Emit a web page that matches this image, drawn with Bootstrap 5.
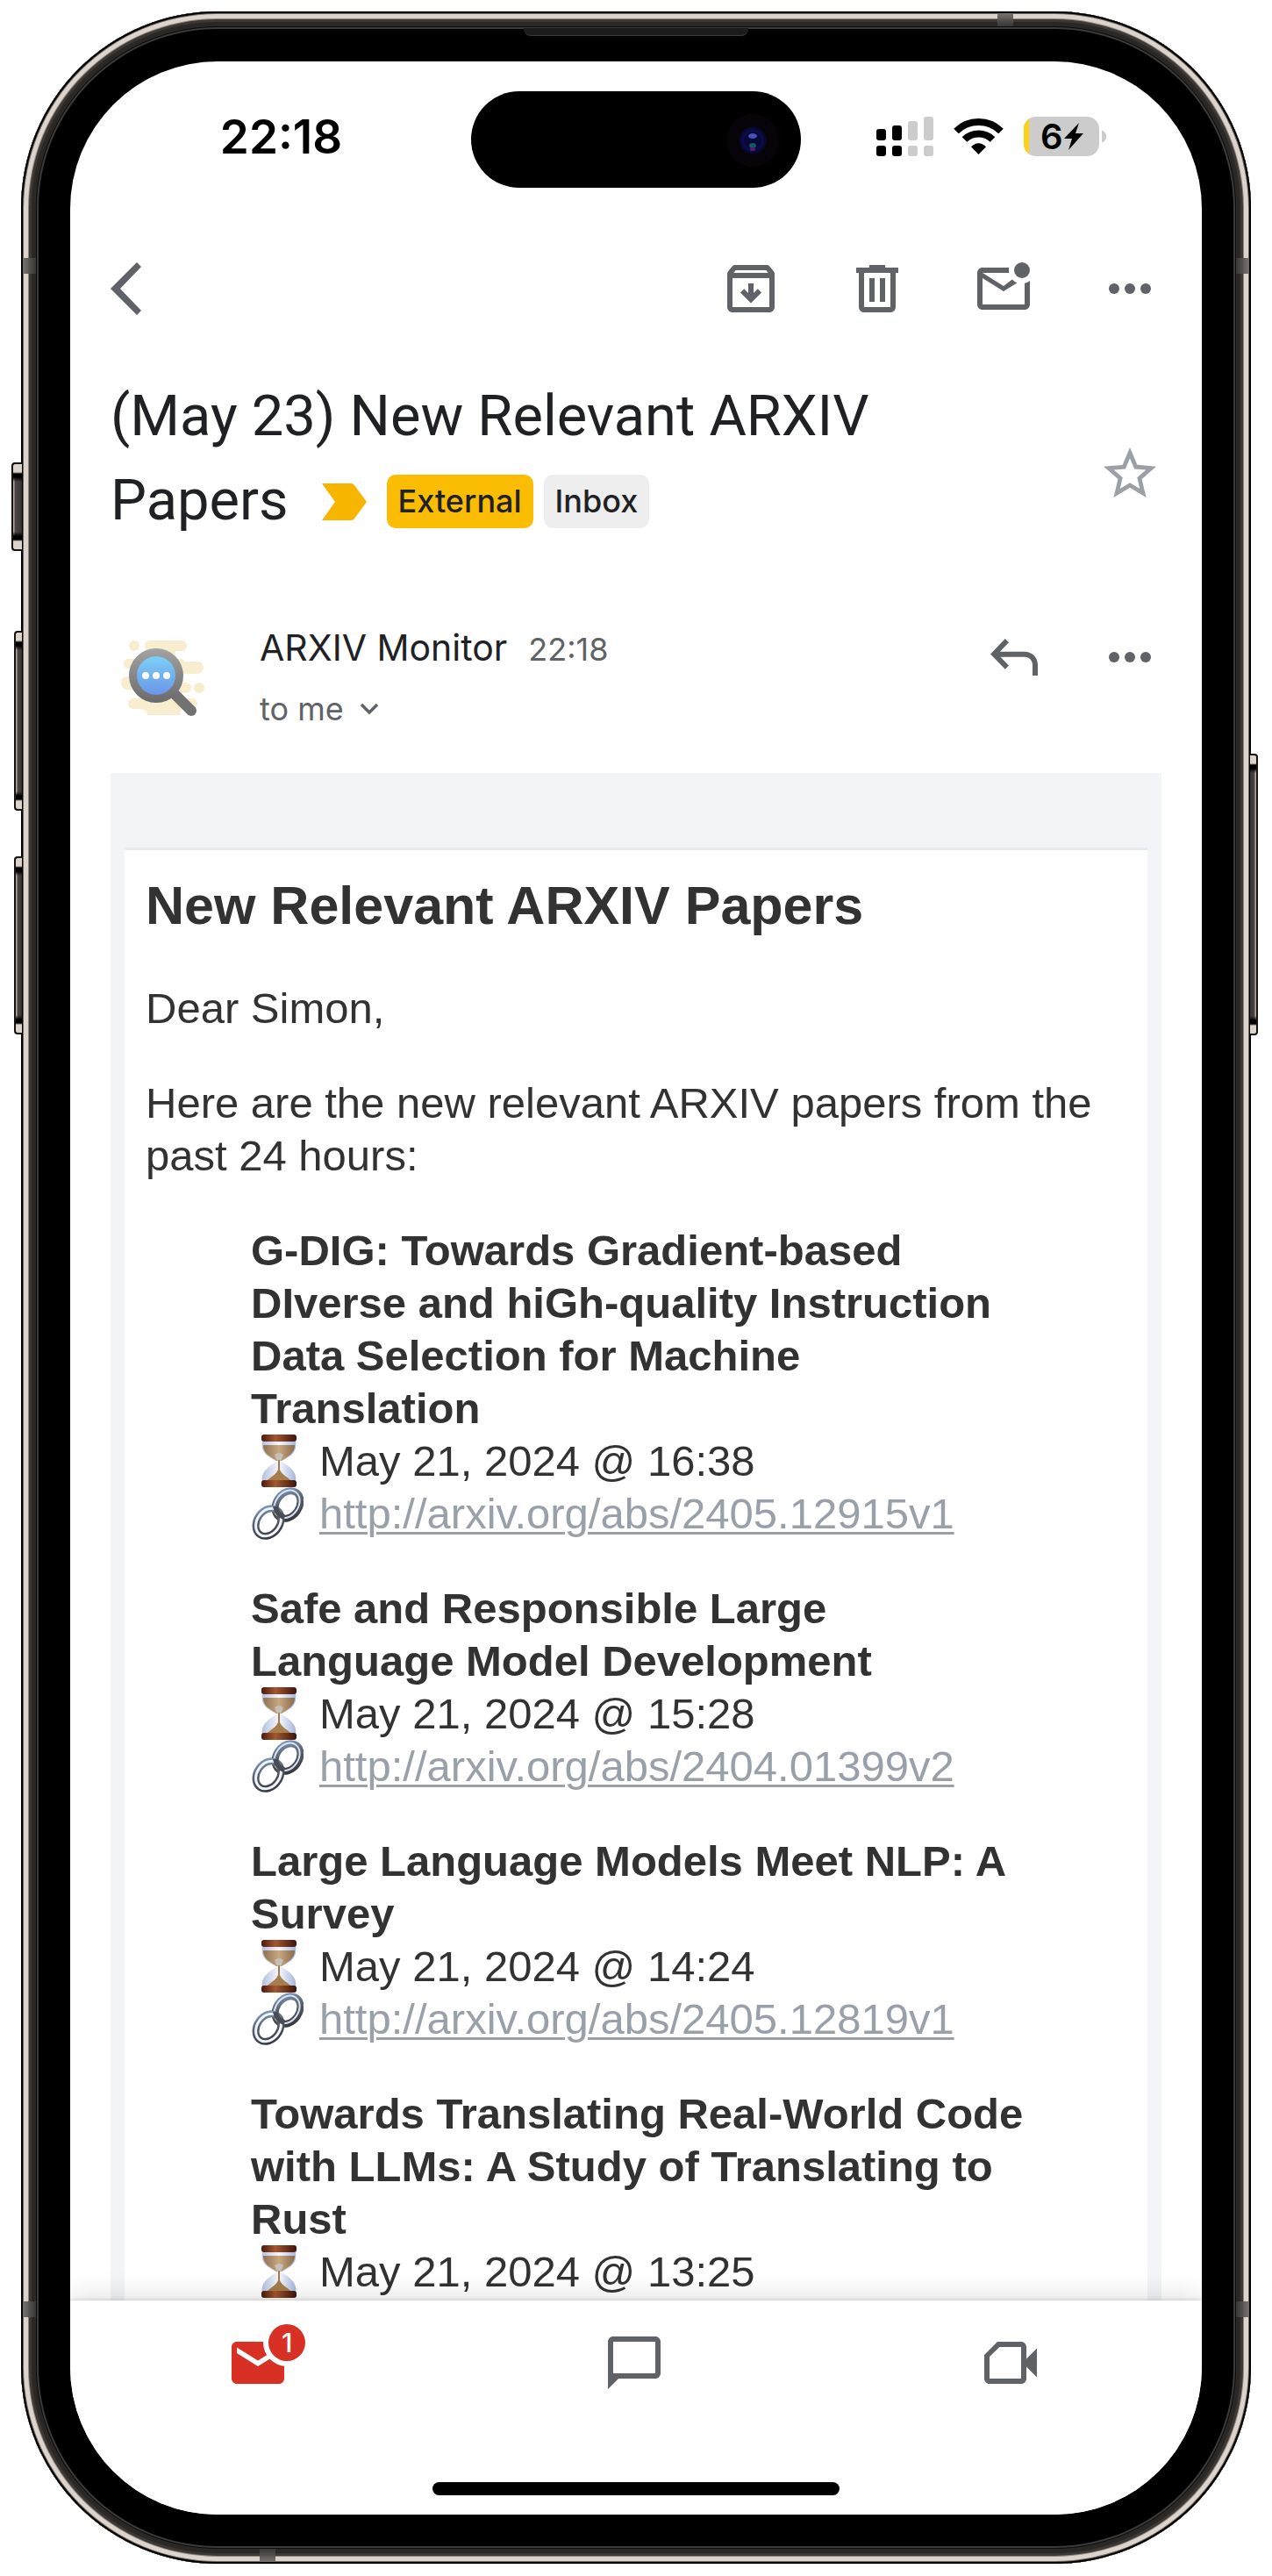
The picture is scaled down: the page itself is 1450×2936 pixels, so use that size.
<!DOCTYPE html>
<html lang="en">
<head>
<meta charset="utf-8">
<meta name="viewport" content="width=device-width, initial-scale=1">
<title>(May 23) New Relevant ARXIV Papers</title>
<link href="https://cdn.jsdelivr.net/npm/bootstrap@5.3.0/dist/css/bootstrap.min.css" rel="stylesheet">
<style>
  body { background: #fff; font-family: Inter, "Liberation Sans", sans-serif; color: #202124; }

  /* Device */
  .stage { padding: 13px 24px 14px; min-height: 100vh; }
  .device {
    background: #000; border-radius: 224px; padding: 57px 56px 56px;
    box-shadow: inset 0 0 0 2px #000, inset 0 0 0 3px #6b635c, inset 0 0 0 8px #dcd3cc,
      inset 0 0 0 9px #8d857e, inset 0 0 0 12px #3c3835, inset 0 0 0 17px #2a2725,
      inset 0 0 0 18px #0c0c0c, inset 0 0 0 20px #3a3a3a;
  }
  .screen { background: #fff; border-radius: 168px; overflow: hidden; }
  .side-key {
    position: absolute; width: 12px; border: 2px solid #17130f; border-right: 0; border-radius: 4px 0 0 4px;
    background:
      linear-gradient(#dcd3cc 0 9px, #000 11px 15px, transparent 20px, transparent calc(100% - 20px), #000 calc(100% - 15px) calc(100% - 11px), #dcd3cc calc(100% - 9px)),
      linear-gradient(90deg, #b0a8a2 0 1px, #4c4646 2px, #383333);
  }
  .side-key.thin { width: 9px; }
  .key-action { left: -11px; top: 514px; height: 101px; }
  .key-up { left: -8px; top: 706px; height: 205px; }
  .key-down { left: -8px; top: 963px; height: 203px; }
  .key-power { right: -8px; top: 846px; height: 321px; transform: scaleX(-1); }
  .band { position: absolute; opacity: .95; }
  .band-side { width: 15px; height: 18px; background: linear-gradient(90deg, #6f6c69, #3a3836); }
  .band-edge { width: 18px; height: 15px; background: linear-gradient(#6f6c69, #3a3836); }
  .band-flip { rotate: 180deg; }
  .earpiece { position: absolute; top: 19px; left: 50%; width: 256px; height: 9px; margin-left: -128px;
    background: #1c1c1c; border-bottom: 1px solid #3a3a3a; border-radius: 0 0 8px 8px; }

  /* Status bar */
  .status { padding-top: 34px; }
  .status-side { flex: 1 1 0; padding-bottom: 6px; }
  .clock { font-size: 53px; font-weight: 600; line-height: 60px; color: #000; }
  .island { width: 376px; height: 110px; border-radius: 55px; background: #000; }

  /* Mail */
  .gutter { padding-left: 46px; padding-right: 46px; }
  .icon-btn { border: 0; padding: 0; background: none; color: #5f6368; line-height: 0; flex: none; }
  .icon-btn svg, .tab svg { fill: currentColor; }
  .toolbar { margin-top: 79px; gap: 72px; }
  .subject { font-family: Roboto, sans-serif; font-size: 65px; font-weight: 400; line-height: 96px; margin: 0; color: #202124; }
  .subject-row { margin-top: 61px; }
  .star { color: #9aa0a6; margin-top: 36px; }
  .tag { font-family: Inter, sans-serif; font-size: 36px; font-weight: 500; line-height: 61px; padding: 0 13px; border-radius: 10px; color: #202124; }
  .tag-external { background: #fbbc04; }
  .tag-inbox { background: #eee; }
  .tag-group { gap: 12px; margin-left: 34px; padding-bottom: 6px; vertical-align: middle; line-height: 61px; }
  .sender-row { margin-top: 95px; }
  .sender-name { font-size: 41px; line-height: 50px; }
  .sender-meta { font-size: 36px; line-height: 50px; color: #5f6368; }
  .sender-text { margin-left: 60px; }
  .recipient { margin-top: 18px; gap: 18px; }
  .sender-actions { gap: 60px; }

  /* Message */
  .message { background: #f3f4f7; padding: 85px 16px 0; margin-top: 48px;
    font-family: "Liberation Sans", Arial, sans-serif; font-size: 49px; line-height: 60px; color: #323232; }
  .paper { background: #fff; border-top: 3px solid #e9eaec; padding: 24px 24px 0; }
  .paper h1 { font-size: 61px; font-weight: 700; line-height: 78px; margin: 0 0 48px; }
  .paper p { margin: 0 0 48px; }
  .papers { margin: 0; padding: 0 110px 0 120px; }
  .papers li + li { margin-top: 48px; }
  .papers h2 { font-size: 49px; font-weight: 700; line-height: 60px; margin: 0; }
  .line { gap: 18px; }
  .line a { color: #9aa0a9; text-decoration-thickness: 3px; text-underline-offset: 4px; }

  /* Bottom bar */
  .tabs { background: #fff; box-shadow: 0 -3px 30px rgba(0,0,0,.14), 0 -1px 4px rgba(0,0,0,.12); padding-top: 35px; position: relative; }
  .tabs .row { padding-right: 4px; }
  .tab { color: #5f6368; line-height: 0; }
  .tab-mail { color: #d93025; }
  .count { position: absolute; left: 48px; top: -8px; width: 42px; height: 42px; border-radius: 50%; background: #d93025; color: #fff;
    font-size: 30px; font-weight: 500; line-height: 42px; text-align: center; box-shadow: 0 0 0 6px #fff; }
  .home-bar { width: 464px; height: 15px; border-radius: 8px; background: #000; margin: 100px auto 22px; }
</style>
</head>
<body>
<div class="stage d-flex flex-column">
<div class="device position-relative d-flex flex-column flex-grow-1">
  <span class="side-key key-action"></span>
  <span class="side-key thin key-up"></span>
  <span class="side-key thin key-down"></span>
  <span class="side-key thin key-power"></span>
  <span class="band band-side" style="left:2px;top:281px"></span>
  <span class="band band-side band-flip" style="right:2px;top:281px"></span>
  <span class="band band-side" style="left:2px;bottom:281px"></span>
  <span class="band band-side band-flip" style="right:2px;bottom:281px"></span>
  <span class="band band-edge" style="right:271px;top:2px"></span>
  <span class="band band-edge band-flip" style="left:272px;bottom:2px"></span>
  <span class="earpiece"></span>

  <div class="screen d-flex flex-column flex-grow-1">
    <div class="status d-flex align-items-center">
      <div class="status-side ps-4 text-center"><span class="clock">22:18</span></div>
      <div class="island d-flex justify-content-end align-items-center">
        <svg width="110" height="110" viewBox="0 0 110 110" aria-hidden="true">
          <defs>
            <radialGradient id="lens"><stop offset="0" stop-color="#15157a"/><stop offset=".65" stop-color="#0d0d50"/><stop offset="1" stop-color="#05051c"/></radialGradient>
          </defs>
          <circle cx="55" cy="56" r="30" fill="#060408"/>
          <circle cx="55" cy="56" r="16" fill="url(#lens)"/>
          <circle cx="55" cy="56" r="10" fill="#070738"/>
          <ellipse cx="55" cy="51" rx="5" ry="3" fill="#4a4fb8"/>
          <ellipse cx="55" cy="62" rx="4" ry="3" fill="#0c5a5e"/>
          <ellipse cx="55" cy="66" rx="3" ry="2" fill="#5a1a6e"/>
        </svg>
      </div>
      <div class="status-side pe-4 d-flex justify-content-center">
        <svg width="262" height="54" viewBox="0 -4 262 54" role="img" aria-label="Signal, Wi-Fi, battery 6 percent charging">
          <g fill="#000"><rect x="0" y="14" width="11" height="13" rx="3"/><rect x="18" y="10" width="11" height="17" rx="3"/>
            <rect x="0" y="33" width="11" height="12" rx="3"/><rect x="18" y="33" width="11" height="12" rx="3"/></g>
          <g fill="#ccc"><rect x="36" y="5" width="11" height="22" rx="3"/><rect x="54" y="0" width="11" height="27" rx="3"/>
            <rect x="36" y="33" width="11" height="12" rx="3"/><rect x="54" y="33" width="11" height="12" rx="3"/></g>
          <g transform="translate(88 1)" fill="none" stroke="#000" stroke-width="8">
            <path d="M3 15.500a36.500 36.500 0 0 1 51 0"/><path d="M12.500 25a23 23 0 0 1 32 0"/>
            <path d="M28.500 42 20 33.200q8.500-8 17 0z" fill="#000" stroke="none"/>
          </g>
          <clipPath id="cell"><rect x="168" y="0" width="86" height="45" rx="14"/></clipPath>
          <g clip-path="url(#cell)"><rect x="168" width="86" height="45" fill="#ccc"/><rect x="168" width="6" height="45" fill="#ffd014"/></g>
          <path d="M257 15.500c7 2.500 7 12 0 14z" fill="#ccc"/>
          <text x="187" y="37" font-family="Inter, sans-serif" font-weight="600" font-size="40">6</text>
          <path d="M231 7 214 25h9l-4 13 17-19h-9z"/>
        </svg>
      </div>
    </div>

    <div class="toolbar gutter d-flex align-items-center">
      <button class="icon-btn me-auto" type="button" aria-label="Back">
        <svg width="36" height="72" viewBox="0 0 36 72"><path d="M30 6 35 11 11 36l24 25-5 5L0 36z"/></svg></button>
      <button class="icon-btn" type="button" aria-label="Archive">
        <svg width="72" height="72" viewBox="0 0 24 24"><path d="M20.540 5.230l-1.390-1.680C18.880 3.210 18.470 3 18 3H6c-.47 0-.88.210-1.160.550L3.460 5.230C3.170 5.570 3 6.020 3 6.500V19c0 1.100.9 2 2 2h14c1.100 0 2-.9 2-2V6.500c0-.48-.17-.93-.46-1.270zM6.240 5h11.520l.83 1H5.420l.82-1zM5 19V8h14v11H5z"/><path d="M12 17.500 8 13.500l1.400-1.400 1.600 1.600V10h2v3.700l1.600-1.600L16 13.500z"/></svg></button>
      <button class="icon-btn" type="button" aria-label="Delete">
        <svg width="72" height="72" viewBox="0 0 24 24"><path d="M15 4V3H9v1H4v2h1v13c0 1.100.9 2 2 2h10c1.100 0 2-.9 2-2V6h1V4h-5zm2 15H7V6h10v13zM9 8h2v9H9zm4 0h2v9h-2z"/></svg></button>
      <button class="icon-btn" type="button" aria-label="Mark as unread">
        <svg width="72" height="72" viewBox="0 0 24 24"><circle cx="19" cy="5" r="3"/><path d="M14 4H4c-1.100 0-2 .9-2 2v12c0 1.100.9 2 2 2h16c1.100 0 2-.9 2-2V9c-.6.500-1.300.800-2 .950V18H4V8l8 5 5.100-3.200c-.7-.3-1.300-.8-1.800-1.300L12 11 4 6h10.100c-.1-.7-.1-1.300-.1-2z"/></svg></button>
      <button class="icon-btn" type="button" aria-label="More options">
        <svg width="72" height="72" viewBox="0 0 24 24"><circle cx="6" cy="12" r="2"/><circle cx="12" cy="12" r="2"/><circle cx="18" cy="12" r="2"/></svg></button>
    </div>

    <div class="subject-row gutter d-flex align-items-center">
      <h1 class="subject flex-grow-1">(May 23) New Relevant ARXIV<br>Papers<span class="tag-group d-inline-flex align-items-center">
          <svg class="me-2" width="58" height="42" viewBox="0 0 58 42" aria-hidden="true"><path d="M4 0h33q3 0 4 2l14 19-14 19q-1 2-4 2H4l15-21z" fill="#f7b500"/></svg>
          <span class="tag tag-external">External</span><span class="tag tag-inbox">Inbox</span></span></h1>
      <button class="icon-btn star" type="button" aria-label="Star">
        <svg width="72" height="72" viewBox="0 0 24 24"><path d="M22 9.240l-7.190-.62L12 2 9.190 8.630 2 9.240l5.460 4.730L5.820 21 12 17.270 18.180 21l-1.630-7.030L22 9.240zM12 15.400l-3.760 2.270 1-4.280-3.320-2.880 4.380-.38L12 6.100l1.710 4.040 4.380.38-3.320 2.880 1 4.280L12 15.400z"/></svg></button>
    </div>

    <div class="sender-row gutter d-flex align-items-start">
      <svg width="110" height="116" viewBox="0 0 110 116" aria-hidden="true">
        <defs><linearGradient id="glass" x2="0" y2="1"><stop offset="0" stop-color="#7bd0f6"/><stop offset="1" stop-color="#6c95e8"/></linearGradient>
          <linearGradient id="rim" x2="0" y2="1"><stop offset="0" stop-color="#a3a3a3"/><stop offset="1" stop-color="#6a6a6a"/></linearGradient></defs>
        <g fill="#f9edcf"><circle cx="27" cy="23" r="6"/><rect x="39" y="17" width="48" height="12" rx="6"/><rect x="15" y="38" width="70" height="11" rx="5"/>
          <rect x="45" y="28" width="29" height="70"/><rect x="60" y="41" width="46" height="14" rx="7"/><rect x="12" y="58" width="60" height="15" rx="7"/>
          <rect x="60" y="65" width="32" height="12" rx="6"/><circle cx="101" cy="71" r="6"/><rect x="20" y="83" width="79" height="12" rx="6"/><path d="M34 92h52q-8 4-6 10H42q0-6-8-7z"/></g>
        <path d="M74 79 92 97" stroke="#727272" stroke-width="12" stroke-linecap="round"/>
        <circle cx="52" cy="57" r="31" fill="url(#rim)"/><circle cx="52" cy="57" r="22" fill="url(#glass)"/>
        <g fill="#fff"><circle cx="40" cy="57" r="4"/><circle cx="52" cy="57" r="4"/><circle cx="64" cy="57" r="4"/></g>
      </svg>
      <div class="sender-text flex-grow-1">
        <div class="d-flex align-items-baseline"><span class="sender-name">ARXIV Monitor</span><span class="sender-meta ms-4">22:18</span></div>
        <div class="recipient sender-meta d-flex align-items-center">to me
          <svg width="22" height="14" viewBox="0 0 22 14" aria-hidden="true"><path d="M2 2l9 9 9-9" fill="none" stroke="#5f6368" stroke-width="3.500"/></svg></div>
      </div>
      <div class="sender-actions d-flex">
        <button class="icon-btn" type="button" aria-label="Reply">
          <svg width="72" height="72" viewBox="0 0 24 24"><path d="M10 6.400 8.600 5 3 10.800l5.600 5.800L10 15.200 6.800 11.900H16c1.700 0 3 1.300 3 3V19h2v-4.100c0-2.800-2.200-5-5-5H6.600z"/></svg></button>
        <button class="icon-btn" type="button" aria-label="More message options">
          <svg width="72" height="72" viewBox="0 0 24 24"><circle cx="6" cy="12" r="2"/><circle cx="12" cy="12" r="2"/><circle cx="18" cy="12" r="2"/></svg></button>
      </div>
    </div>

    <svg width="0" height="0" class="position-absolute" aria-hidden="true">
      <defs>
        <linearGradient id="wood"><stop offset="0" stop-color="#4a1c0c"/><stop offset=".4" stop-color="#a4562f"/><stop offset="1" stop-color="#3c1508"/></linearGradient>
        <linearGradient id="sand"><stop offset="0" stop-color="#8f7152"/><stop offset=".5" stop-color="#c9a880"/><stop offset="1" stop-color="#8a6b4c"/></linearGradient>
        <linearGradient id="bulb"><stop offset="0" stop-color="#b3c0e0"/><stop offset=".5" stop-color="#f7f8fc"/><stop offset="1" stop-color="#a4b6e0"/></linearGradient>
        <linearGradient id="steel" x2="1" y2="1"><stop offset="0" stop-color="#7d9fc8"/><stop offset=".4" stop-color="#5d636e"/><stop offset="1" stop-color="#34343a"/></linearGradient>
        <symbol id="hourglass" viewBox="0 0 60 60">
          <path d="M13 8h38c2 14-7 17-16 23 10 6 18 12 16 23H13c-2-12 7-17 16-23-9-6-18-9-16-23z" fill="url(#bulb)"/>
          <path d="M14 12h36c0 10-8 13-15 18h-6c-7-5-15-8-15-18z" fill="url(#sand)"/>
          <path d="M27 23q5-4 10 0l-3 7h-4z" fill="#c4c0bd"/>
          <path d="M31 29h2v11c2 6 9 8 13 13H18c4-5 11-7 13-13z" fill="#a57c4a"/>
          <rect x="12" y="0" width="40" height="8" rx="3" fill="url(#wood)"/><rect x="12" y="52" width="40" height="8" rx="3" fill="url(#wood)"/>
        </symbol>
        <symbol id="chain" viewBox="0 0 60 60">
          <g fill="none"><g transform="rotate(35 42 20)"><ellipse cx="42" cy="20" rx="13" ry="17" stroke="url(#steel)" stroke-width="8"/><ellipse cx="41" cy="20" rx="13" ry="17" stroke="#d5e4f5" stroke-width="2"/></g>
          <g transform="rotate(35 20 40)"><ellipse cx="20" cy="40" rx="13" ry="17" stroke="url(#steel)" stroke-width="8"/><ellipse cx="20" cy="40" rx="13" ry="17" stroke="#eef4fb" stroke-width="3"/></g>
          <path d="M28 22q2 10 10 12" stroke="#4b4b54" stroke-width="6"/></g>
        </symbol>
      </defs>
    </svg>

    <main class="gutter flex-grow-1 d-flex flex-column">
      <div class="message flex-grow-1 d-flex flex-column">
        <article class="paper flex-grow-1">
          <h1>New Relevant ARXIV Papers</h1>
          <p>Dear Simon,</p>
          <p>Here are the new relevant ARXIV papers from the past 24 hours:</p>
          <ul class="papers list-unstyled">
            <li>
              <h2>G-DIG: Towards Gradient-based DIverse and hiGh-quality Instruction Data Selection for Machine Translation</h2>
              <div class="line d-flex"><svg width="60" height="60" aria-hidden="true"><use href="#hourglass"/></svg><span>May 21, 2024 @ 16:38</span></div>
              <div class="line d-flex"><svg width="60" height="60" aria-hidden="true"><use href="#chain"/></svg><a href="http://arxiv.org/abs/2405.12915v1">http://arxiv.org/abs/2405.12915v1</a></div>
            </li>
            <li>
              <h2>Safe and Responsible Large Language Model Development</h2>
              <div class="line d-flex"><svg width="60" height="60" aria-hidden="true"><use href="#hourglass"/></svg><span>May 21, 2024 @ 15:28</span></div>
              <div class="line d-flex"><svg width="60" height="60" aria-hidden="true"><use href="#chain"/></svg><a href="http://arxiv.org/abs/2404.01399v2">http://arxiv.org/abs/2404.01399v2</a></div>
            </li>
            <li>
              <h2>Large Language Models Meet NLP: A Survey</h2>
              <div class="line d-flex"><svg width="60" height="60" aria-hidden="true"><use href="#hourglass"/></svg><span>May 21, 2024 @ 14:24</span></div>
              <div class="line d-flex"><svg width="60" height="60" aria-hidden="true"><use href="#chain"/></svg><a href="http://arxiv.org/abs/2405.12819v1">http://arxiv.org/abs/2405.12819v1</a></div>
            </li>
            <li>
              <h2>Towards Translating Real-World Code with LLMs: A Study of Translating to Rust</h2>
              <div class="line d-flex"><svg width="60" height="60" aria-hidden="true"><use href="#hourglass"/></svg><span>May 21, 2024 @ 13:25</span></div>
            </li>
          </ul>
        </article>
      </div>
    </main>

    <nav class="tabs" aria-label="Sections">
      <div class="row g-0 text-center">
        <div class="col"><a class="tab tab-mail d-inline-block position-relative" href="#mail" aria-label="Mail, 1 unread">
          <svg width="72" height="72" viewBox="0 0 24 24"><path d="M20 4H4c-1.100 0-2 .9-2 2v12c0 1.100.9 2 2 2h16c1.100 0 2-.9 2-2V6c0-1.100-.9-2-2-2zm0 4.300-8 5-8-5V6.200l8 5 8-5z"/></svg><span class="count">1</span></a></div>
        <div class="col"><a class="tab d-inline-block" href="#chat" aria-label="Chat">
          <svg width="72" height="72" viewBox="0 0 24 24"><path d="M4 4h16v12H4V4m0-2c-1.100 0-2 .9-2 2v18l4-4h14c1.100 0 2-.9 2-2V4c0-1.100-.9-2-2-2H4z"/></svg></a></div>
        <div class="col"><a class="tab d-inline-block" href="#meet" aria-label="Meet">
          <svg width="72" height="72" viewBox="0 0 24 24"><path d="M16 6v12H4V9.700L7.800 6H16m0-2H7L2 9v9c0 1.100.9 2 2 2h12c1.100 0 2-.9 2-2v-4.500l4 4v-11l-4 4V6c0-1.100-.9-2-2-2z"/></svg></a></div>
      </div>
      <div class="home-bar"></div>
    </nav>
  </div>
</div>
</div>
<script src="https://cdn.jsdelivr.net/npm/bootstrap@5.3.0/dist/js/bootstrap.bundle.min.js"></script>
</body>
</html>
